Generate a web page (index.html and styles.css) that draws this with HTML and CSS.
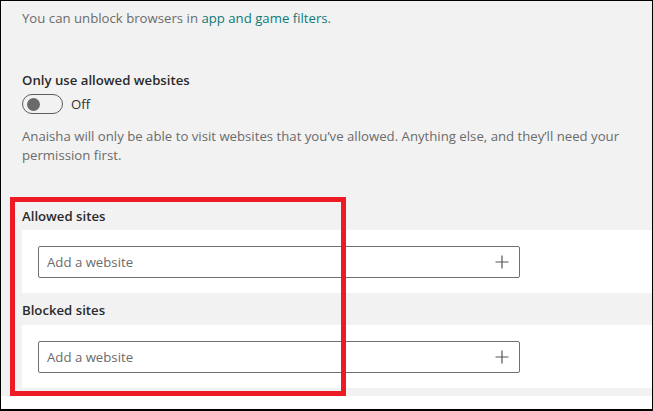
FILE: index.html
```html
<!DOCTYPE html>
<html lang="en">
<head>
<meta charset="utf-8">
<title>Content filters</title>
<link rel="stylesheet" href="styles.css">
</head>
<body>
<div class="frame">
  <main class="page">
    <p class="note">You can unblock browsers in <a class="link" href="#">app and game filters</a>.</p>
    <section class="setting">
      <h2 class="setting-title">Only use allowed websites</h2>
      <div class="toggle-row">
        <span class="toggle"><span class="knob"></span></span>
        <span class="toggle-label">Off</span>
      </div>
      <p class="desc">Anaisha will only be able to visit websites that you’ve allowed. Anything else, and they’ll need your permission first.</p>
    </section>
    <section class="sites">
      <h3 class="sites-title">Allowed sites</h3>
      <div class="panel">
        <div class="field">
          <span class="placeholder">Add a website</span>
          <svg class="plus" width="14" height="14" viewBox="0 0 14 14"><path d="M7 0.5V13.5M0.5 7H13.5" stroke="#555" stroke-width="1.2" fill="none"/></svg>
        </div>
      </div>
      <h3 class="sites-title">Blocked sites</h3>
      <div class="panel">
        <div class="field">
          <span class="placeholder">Add a website</span>
          <svg class="plus" width="14" height="14" viewBox="0 0 14 14"><path d="M7 0.5V13.5M0.5 7H13.5" stroke="#555" stroke-width="1.2" fill="none"/></svg>
        </div>
      </div>
    </section>
  </main>
  <div class="highlight"></div>
</div>
</body>
</html>
```
FILE: styles.css
```css
* { box-sizing: border-box; }
html, body { margin: 0; padding: 0; background: #fff; }
body {
  font-family: "Open Sans", "Noto Sans", sans-serif;
  font-size: 13.2px;
  color: #6b6b6b;
}
.frame {
  position: relative;
  width: 653px;
  height: 411px;
  border: 1px solid #000;
  border-bottom-width: 2px;
  background: #fff;
}
.page {
  background: #f2f2f2;
  padding: 7px 0 8px 21px;
}
.note {
  margin: 0;
  line-height: 20px;
}
.link { color: #0f7a78; text-decoration: none; }
.setting-title {
  margin: 42px 0 0;
  font-size: 13.2px;
  font-weight: 600;
  line-height: 20px;
  color: #2b2b2b;
}
.toggle-row {
  display: flex;
  align-items: center;
  gap: 8px;
  margin-top: 4px;
  height: 20px;
}
.toggle {
  display: flex;
  align-items: center;
  width: 41px;
  height: 20px;
  border: 1px solid #5c5c5c;
  border-radius: 10px;
  padding-left: 4px;
}
.knob {
  width: 13px;
  height: 13px;
  border-radius: 50%;
  background: #6a6a6a;
}
.toggle-label { color: #333; }
.desc {
  margin: 13px 0 0;
  line-height: 19px;
  width: 615px;
}
.sites-title {
  margin: 41px 0 4px;
  font-size: 13.2px;
  font-weight: 600;
  line-height: 20px;
  color: #2b2b2b;
}
.panel + .sites-title { margin: 7px 0 5px; }
.panel {
  background: #fff;
  padding: 16px 0 15px 16px;
}
.field {
  display: flex;
  align-items: center;
  justify-content: space-between;
  width: 482px;
  height: 32px;
  border: 1px solid #6f6f6f;
  border-radius: 2px;
  padding: 0 10px 0 8px;
}
.placeholder { color: #6b6b6b; }
.highlight {
  position: absolute;
  left: 9px;
  top: 196px;
  width: 336px;
  height: 199px;
  border: 5px solid #ed1c24;
}
```
